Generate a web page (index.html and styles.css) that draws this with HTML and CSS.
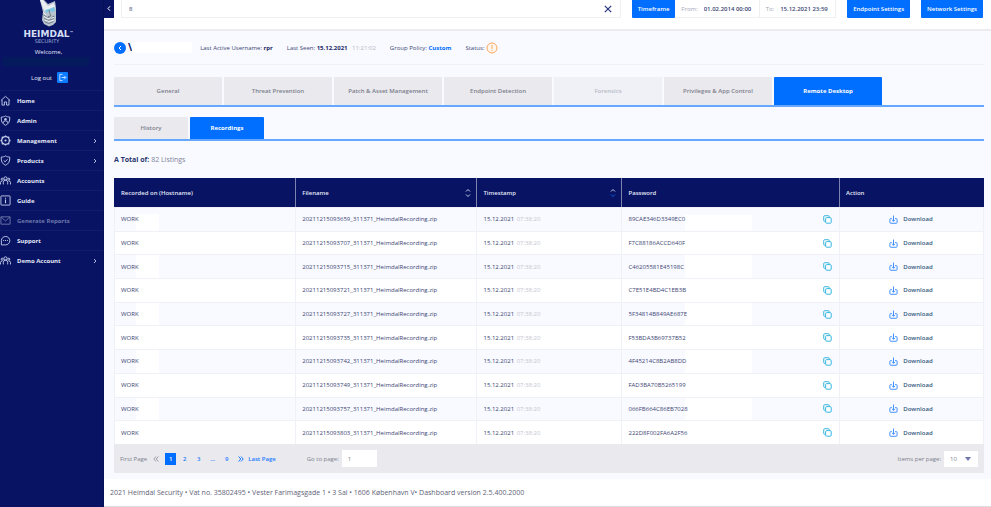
FILE: index.html
```html
<!DOCTYPE html>
<html lang="en">
<head>
<meta charset="utf-8">
<title>Heimdal Security Dashboard</title>
<link rel="stylesheet" href="styles.css">
</head>
<body>
<svg class="defs" aria-hidden="true">
  <symbol id="i-copy" viewBox="0 0 10 10"><path d="M7 2.6V1.8A1 1 0 0 0 6 .8H1.8a1 1 0 0 0-1 1V6a1 1 0 0 0 1 1h.8" fill="none" stroke="currentColor" stroke-width="1.1"/><rect x="2.9" y="2.9" width="6.2" height="6.2" rx="1.2" fill="#fff" stroke="currentColor" stroke-width="1.1"/></symbol>
  <symbol id="i-down" viewBox="0 0 10 10"><path d="M3.200 4H2a1 1 0 0 0-1 1v3.200a1 1 0 0 0 1 1h6a1 1 0 0 0 1-1V5a1 1 0 0 0-1-1H6.800M5 .6v6.200M3.400 5.400 5 7l1.600-1.600" fill="none" stroke="currentColor" stroke-width="1"/></symbol>
  <symbol id="i-right" viewBox="0 0 6 6"><path d="M2 1l2 2-2 2" fill="none" stroke="currentColor" stroke-width=".9"/></symbol>
  <symbol id="i-people" viewBox="0 0 14 12"><g fill="none" stroke="currentColor" stroke-width="1.200"><circle cx="7" cy="3.300" r="2"/><path d="M4.200 11V8.400a2.800 2.800 0 0 1 5.600 0V11"/><circle cx="2.800" cy="4.300" r="1.300"/><circle cx="11.200" cy="4.300" r="1.300"/><path d="M.6 11V8.600a2.200 2.200 0 0 1 2.400-2M13.400 11V8.600a2.200 2.200 0 0 0-2.400-2"/></g></symbol>
</svg>
<div class="app">
  <aside class="sidebar">
    <div class="brand">
      <svg class="brand-mark" viewBox="0 0 18 27" aria-hidden="true"><path d="M0 0h4l4 4 7-3 1 7v14l-3 3-4 1.500L4 24 2 20l1-8z" fill="#b9c3cd"/><path d="M0 0h3l5 6 6-3 1 4-5 2-5 3-2-4z" fill="#e9eef2"/><path d="M5 10l4-1 5-2 1 4-3 1-2-1-4 2z" fill="#7cc6e4"/><path d="M9 10l1 4 1 2-3 .5M3.500 15l3 2 4 1 4-2M4 18l4 2.500 6-2M4.500 21.500l4 2 5-2" fill="none" stroke="#66747f" stroke-width=".9"/><path d="M4 16.500l4 2 6-1M5 20l4 1.500 5-1.500M3 12l3 3" fill="none" stroke="#f5f8fa" stroke-width=".8"/></svg>
      <span class="brand-name">HEIMDAL<sup>™</sup></span>
      <span class="brand-sub">SECURITY</span>
    </div>
    <p class="welcome">Welcome,</p>
    <div class="user-name"></div>
    <a class="logout" href="#">Log out <span class="logout-icon"><svg viewBox="0 0 10 10"><path d="M5 1.500H2v7h3M4 5h4.500M6.800 3l2 2-2 2" fill="none" stroke="#cfe3ff"/></svg></span></a>
    <nav class="nav">
      <a href="#"><svg viewBox="0 0 12 12"><path d="M1 6l5-4.500L11 6M2.200 5.200V11h2.600V7.600h2.400V11h2.600V5.200" fill="none" stroke="currentColor"/></svg><span>Home</span></a>
      <a href="#"><svg viewBox="0 0 12 12"><path d="M6 1c1.500 1 3 1.200 4.600 1.200C11 7 9.500 9.600 6 11.200 2.500 9.600 1 7 1.400 2.200 3 2.200 4.500 2 6 1z" fill="none" stroke="currentColor"/><circle cx="6" cy="4.700" r="1.300" fill="currentColor"/><path d="M3.500 8.600a2.500 2.300 0 0 1 5 0" fill="none" stroke="currentColor"/></svg><span>Admin</span></a>
      <a href="#"><svg viewBox="0 0 12 12"><circle cx="6" cy="6" r="4.200" fill="none" stroke="currentColor" stroke-width="1.400"/><circle cx="6" cy="6" r="1.200" fill="currentColor"/><path d="M6 .5v1.500M6 10v1.500M.5 6H2M10 6h1.500M2 2l1 1M9 9l1 1M10 2L9 3M3 9l-1 1" stroke="currentColor" stroke-width="1.500"/></svg><span>Management</span><svg class="chev"><use href="#i-right"/></svg></a>
      <a href="#"><svg viewBox="0 0 12 12"><path d="M6 1c1.500 1 3 1.200 4.600 1.200C11 7 9.500 9.600 6 11.200 2.500 9.600 1 7 1.400 2.200 3 2.200 4.500 2 6 1zM4 6l1.600 1.500L8.200 4.600" fill="none" stroke="currentColor"/></svg><span>Products</span><svg class="chev"><use href="#i-right"/></svg></a>
      <a href="#"><svg><use href="#i-people"/></svg><span>Accounts</span></a>
      <a href="#"><svg viewBox="0 0 12 12"><rect x="1" y="1" width="10" height="10" rx=".5" fill="none" stroke="currentColor"/><path d="M6 3v1.200M6 5v4" stroke="currentColor" stroke-width="1.200"/></svg><span>Guide</span></a>
      <a href="#" class="muted"><svg viewBox="0 0 12 12"><path d="M1 2h10v8H1zM1 2l5 4.500L11 2" fill="none" stroke="currentColor"/></svg><span>Generate Reports</span></a>
      <a href="#"><svg viewBox="0 0 12 12"><path d="M1.500 10.800V6A4.600 4.600 0 1 1 6 10.800z" fill="none" stroke="currentColor"/><path d="M3.500 6h1M5.500 6h1M7.500 6h1" stroke="currentColor" stroke-width="1.200"/></svg><span>Support</span></a>
      <a href="#"><svg><use href="#i-people"/></svg><span>Demo Account</span><svg class="chev"><use href="#i-right"/></svg></a>
    </nav>
  </aside>

  <div class="page">
    <header class="topbar">
      <button class="collapse" aria-label="Collapse menu"><svg viewBox="0 0 6 6"><path d="M4 .8L2 3l2 2.200" fill="none" stroke="currentColor"/></svg></button>
      <div class="search">
        <input type="text" value="8" aria-label="Search">
        <button aria-label="Clear search"><svg viewBox="0 0 8 8"><path d="M.8.8l6.400 6.400M7.200.8L.8 7.200" stroke="#25327e" stroke-width="1.200"/></svg></button>
      </div>
      <div class="timeframe">
        <button class="primary">Timeframe</button>
        <label class="date from">From: <input type="text" value="01.02.2014 00:00"></label>
        <label class="date to">To: <input type="text" value="15.12.2021 23:59"></label>
      </div>
      <button class="primary">Endpoint Settings</button>
      <button class="primary">Network Settings</button>
    </header>

    <main class="content">
      <div class="host">
        <div class="host-title">
          <button class="back" aria-label="Back"><svg viewBox="0 0 6 6"><path d="M4 1L2 3l2 2" fill="none" stroke="currentColor"/></svg></button>
          <h1>\</h1><span class="host-mask"></span>
        </div>
        <span>Last Active Username: <b>rpr</b></span>
        <span>Last Seen: <b>15.12.2021</b> <time>11:21:02</time></span>
        <span>Group Policy: <a href="#">Custom</a></span>
        <span class="status">Status: <svg viewBox="0 0 12 12"><circle cx="6" cy="6" r="5" fill="#fff6ee" stroke="#f9a75f"/><path d="M6 3v3.800M6 7.800v1.200" stroke="#f9a75f"/></svg></span>
      </div>

      <nav class="tabs">
        <a href="#">General</a><a href="#">Threat Prevention</a><a href="#">Patch &amp; Asset Management</a><a href="#">Endpoint Detection</a><a href="#" class="off">Forensics</a><a href="#">Privileges &amp; App Control</a><a href="#" class="on">Remote Desktop</a>
      </nav>
      <nav class="tabs sub">
        <a href="#">History</a><a href="#" class="on">Recordings</a>
      </nav>

      <p class="total"><b>A Total of:</b> 82 Listings</p>

      <table class="grid">
        <colgroup><col class="c5"><col class="c5"><col class="c4"><col class="c6"><col class="c4"></colgroup>
        <thead><tr>
          <th>Recorded on (Hostname)</th>
          <th><div>Filename <svg viewBox="0 0 6 10"><path d="M1 3.500l2-2 2 2M1 6.500l2 2 2-2" fill="none" stroke="#c5cbe6"/></svg></div></th>
          <th><div>Timestamp <svg viewBox="0 0 6 10"><path d="M1 3.500l2-2 2 2" fill="none" stroke="#c5cbe6"/><path d="M1 6.500l2 2 2-2" fill="none" stroke="#0f5fe0"/></svg></div></th>
          <th>Password</th>
          <th>Action</th>
        </tr></thead>
        <tbody>
          <tr><td class="name">WORK</td><td>20211215093659_311371_HeimdalRecording.zip</td><td>15.12.2021 <time>07:38:20</time></td><td class="pass"><div><span>89CAE346D3349EC0</span><button aria-label="Copy"><svg><use href="#i-copy"/></svg></button></div></td><td class="act"><a href="#"><svg><use href="#i-down"/></svg>Download</a></td></tr>
          <tr><td class="name">WORK</td><td>20211215093707_311371_HeimdalRecording.zip</td><td>15.12.2021 <time>07:38:20</time></td><td class="pass"><div><span>F7C88186ACCD640F</span><button aria-label="Copy"><svg><use href="#i-copy"/></svg></button></div></td><td class="act"><a href="#"><svg><use href="#i-down"/></svg>Download</a></td></tr>
          <tr><td class="name">WORK</td><td>20211215093715_311371_HeimdalRecording.zip</td><td>15.12.2021 <time>07:38:20</time></td><td class="pass"><div><span>C46205581E45198C</span><button aria-label="Copy"><svg><use href="#i-copy"/></svg></button></div></td><td class="act"><a href="#"><svg><use href="#i-down"/></svg>Download</a></td></tr>
          <tr><td class="name">WORK</td><td>20211215093721_311371_HeimdalRecording.zip</td><td>15.12.2021 <time>07:38:20</time></td><td class="pass"><div><span>C7E51E4BD4C1EB3B</span><button aria-label="Copy"><svg><use href="#i-copy"/></svg></button></div></td><td class="act"><a href="#"><svg><use href="#i-down"/></svg>Download</a></td></tr>
          <tr><td class="name">WORK</td><td>20211215093727_311371_HeimdalRecording.zip</td><td>15.12.2021 <time>07:38:20</time></td><td class="pass"><div><span>5F34814B849AE687E</span><button aria-label="Copy"><svg><use href="#i-copy"/></svg></button></div></td><td class="act"><a href="#"><svg><use href="#i-down"/></svg>Download</a></td></tr>
          <tr><td class="name">WORK</td><td>20211215093735_311371_HeimdalRecording.zip</td><td>15.12.2021 <time>07:38:20</time></td><td class="pass"><div><span>F53BDA3B69737B52</span><button aria-label="Copy"><svg><use href="#i-copy"/></svg></button></div></td><td class="act"><a href="#"><svg><use href="#i-down"/></svg>Download</a></td></tr>
          <tr><td class="name">WORK</td><td>20211215093742_311371_HeimdalRecording.zip</td><td>15.12.2021 <time>07:38:20</time></td><td class="pass"><div><span>4F45214C8B2AB8DD</span><button aria-label="Copy"><svg><use href="#i-copy"/></svg></button></div></td><td class="act"><a href="#"><svg><use href="#i-down"/></svg>Download</a></td></tr>
          <tr><td class="name">WORK</td><td>20211215093749_311371_HeimdalRecording.zip</td><td>15.12.2021 <time>07:38:20</time></td><td class="pass"><div><span>FAD3BA70B5265199</span><button aria-label="Copy"><svg><use href="#i-copy"/></svg></button></div></td><td class="act"><a href="#"><svg><use href="#i-down"/></svg>Download</a></td></tr>
          <tr><td class="name">WORK</td><td>20211215093757_311371_HeimdalRecording.zip</td><td>15.12.2021 <time>07:38:20</time></td><td class="pass"><div><span>066FB664C86EB7028</span><button aria-label="Copy"><svg><use href="#i-copy"/></svg></button></div></td><td class="act"><a href="#"><svg><use href="#i-down"/></svg>Download</a></td></tr>
          <tr><td class="name">WORK</td><td>20211215093803_311371_HeimdalRecording.zip</td><td>15.12.2021 <time>07:38:20</time></td><td class="pass"><div><span>222D8F002FA6A2F56</span><button aria-label="Copy"><svg><use href="#i-copy"/></svg></button></div></td><td class="act"><a href="#"><svg><use href="#i-down"/></svg>Download</a></td></tr>
        </tbody>
      </table>

      <div class="pager">
        <span class="first">First Page</span>
        <svg class="first" viewBox="0 0 6 8"><path d="M3 1.500L.8 4 3 6.500M5.400 1.500L3.200 4l2.200 2.500" fill="none" stroke="currentColor" stroke-width=".7"/></svg>
        <div class="pages"><a class="on" href="#">1</a><a href="#">2</a><a href="#">3</a><a href="#">...</a><a href="#">9</a></div>
        <a class="last" href="#"><svg viewBox="0 0 6 8"><path d="M.6 1.500L2.800 4 .6 6.500M3 1.500L5.200 4 3 6.500" fill="none" stroke="currentColor"/></svg>Last Page</a>
        <label class="goto">Go to page: <input type="text" value="1"></label>
        <label class="per">Items per page: <select><option>10</option></select></label>
      </div>
    </main>

    <footer class="footer">2021 Heimdal Security • Vat no. 35802495 • Vester Farimagsgade 1 • 3 Sal • 1606 København V• Dashboard version 2.5.400.2000</footer>
  </div>
</div>
</body>
</html>
```
FILE: styles.css
```css
* { box-sizing: border-box; }

body {
  margin: 0;
  font: 6px/8px "Open Sans", sans-serif;
  color: #3b4573;
  background: #fff;
}

a { color: inherit; text-decoration: none; }

button, input, select {
  font: inherit;
  color: inherit;
  border: 0;
  padding: 0;
  margin: 0;
  background: none;
}

p, h1 { margin: 0; }

.defs { display: none; }

.app { display: flex; min-height: 100vh; }

/* Sidebar */
.sidebar {
  flex: none;
  width: 104px;
  background: #081463;
  border-right: 1px solid #051055;
  color: #e4e8f8;
}

.brand { display: flex; flex-direction: column; align-items: center; padding-right: 6px; }
.brand-mark { width: 18px; height: 27px; }
.brand-name {
  margin-top: 2px;
  font: bold 9px/10px "DejaVu Sans", sans-serif;
  color: #d5def5;
}
.brand-name sup { font-size: 4px; line-height: 4px; vertical-align: 3px; }
.brand-sub { margin-right: 3px; font: 5px/4px "DejaVu Sans", sans-serif; color: #9fabd8; }

.welcome { margin-top: 4px; padding-right: 6px; line-height: 10px; text-align: center; }
.user-name { height: 9px; margin: 0 14px 0 3px; background: #051a5c; }

.logout {
  display: flex;
  align-items: center;
  gap: 5px;
  margin: 6px 0 7px 31px;
}
.logout-icon { display: flex; width: 11px; height: 11px; padding: 1px; border-radius: 1px; background: #0b7bff; }

.nav a {
  display: flex;
  align-items: center;
  gap: 6px;
  height: 20px;
  padding-right: 5px;
  border-top: 1px solid #101d6d;
  font-weight: 700;
}
.nav svg { width: 11px; height: 11px; color: #c3cbea; }
.nav span { flex: 1; }
.nav .chev { width: 6px; height: 6px; }
.nav .muted, .nav .muted svg { color: #6d77ab; }

/* Top bar */
.page { flex: 1; min-width: 0; display: flex; flex-direction: column; }

.topbar {
  display: flex;
  align-items: flex-start;
  gap: 11px;
  height: 31px;
  padding-right: 8px;
  border-bottom: 2px solid #ebebf0;
}

.collapse { width: 10px; height: 18px; margin-right: -4px; background: #081463; color: #fff; }
.collapse svg { width: 6px; height: 7px; }

.search {
  flex: 1;
  display: flex;
  align-items: center;
  height: 18px;
  padding: 0 8px 0 7px;
  border: 1px solid #f0f0f4;
  border-top: 0;
}
.search input { flex: 1; min-width: 0; }
.search svg { display: block; width: 8px; height: 8px; }

.timeframe { display: flex; }
.primary {
  height: 18px;
  padding: 0 6px;
  border-radius: 0 0 1px 1px;
  background: #006eff;
  color: #fff;
  font-weight: 600;
}
.date {
  display: flex;
  align-items: center;
  gap: 6px;
  height: 18px;
  padding: 0 6px;
  border: solid #f0f0f4;
  border-width: 0 1px 1px 0;
  color: #a3a6b8;
}
.date input { width: 49px; font-weight: 600; color: #3b4573; }

/* Host summary */
.content { padding: 0 7px 6px 10px; background: #f9faff; }

.host {
  display: flex;
  align-items: center;
  gap: 14px;
  height: 34px;
  border-bottom: 1px solid #f0f1f5;
}
.host time { margin-left: 3px; color: #b3b6c4; }
.host a { color: #006eff; font-weight: 700; }
.host b { color: #1c2865; }
.host-title { display: flex; align-items: center; margin-right: -6px; }
.host-title h1 { margin-left: 2px; font-size: 10px; line-height: 11px; color: #081463; }
.host-mask { flex: 0 0 60px; height: 11px; background: #fff; }
.back { display: flex; align-items: center; justify-content: center; width: 12px; height: 12px; border-radius: 50%; background: #006eff; color: #fff; }
.back svg { width: 6px; height: 6px; }
.status { display: flex; align-items: center; gap: 2px; }
.status svg { width: 12px; height: 12px; }

/* Tabs */
.tabs {
  display: flex;
  gap: 2px;
  margin-top: 12px;
  border-bottom: 2px solid #66a8ff;
}
.tabs a {
  flex: 0 0 108px;
  height: 28px;
  line-height: 28px;
  text-align: center;
  font-weight: 600;
  color: #7d7f8c;
  background: #e9e9ee;
}
.tabs .off { background: #eff1f6; color: #b8bac6; }
.tabs .on { background: #006eff; color: #fff; font-weight: 700; border-radius: 1px 1px 0 0; }
.sub { margin-top: 10px; }
.sub a { flex-basis: 74px; height: 22px; line-height: 22px; }

.total { font-size: 7px; line-height: 37px; color: #81849a; }
.total b { color: #28336c; }

/* Recordings table */
.grid {
  width: 100%;
  height: 266px;
  table-layout: fixed;
  border-collapse: separate;
  border-spacing: 0;
}
.c4 { width: 16.6667%; }
.c5 { width: 20.8333%; }
.c6 { width: 25%; }

.grid th {
  height: 29px;
  padding: 0 5px 0 6px;
  background: #081463;
  border-left: 1px solid #7b83ae;
  text-align: left;
  font-weight: 600;
  color: #e4e8f8;
}
.grid th:first-child { border-left-color: #081463; }
.grid th div { display: flex; align-items: center; justify-content: space-between; }
.grid th svg { width: 6px; height: 10px; }

.grid td {
  padding: 0 7px 0 6px;
  border-left: 1px solid #f0f1f6;
  border-top: 1px solid #f0f1f6;
  white-space: nowrap;
}
.grid td:last-child { border-right: 1px solid #f0f1f6; }
.grid tbody tr:nth-child(even) { background: #fff; }
.grid time { margin-left: 1px; color: #c3c5cf; }

.grid .name { background: linear-gradient(#fff, #fff) 22px 0 / 23px 100% no-repeat border-box; }
.grid .pass { background: linear-gradient(#fff, #fff) 64px 0 / 67px 100% no-repeat border-box; }
.grid tr:first-child .name { background-position-y: 7px; }
.grid tr:first-child .pass { background-position-y: 8px; }
.pass div { display: flex; align-items: center; justify-content: space-between; }
.pass svg { display: block; width: 9px; height: 9px; color: #35b5e0; }

.act a { display: flex; align-items: center; justify-content: center; gap: 5px; font-weight: 600; color: #34597c; }
.act svg { width: 9px; height: 9px; color: #2f86ff; }

/* Pager */
.pager {
  display: flex;
  align-items: center;
  gap: 6px;
  height: 29px;
  padding: 0 6px;
  background: #e9e9ee;
  color: #7d7f8c;
}
.pager svg { width: 6px; height: 8px; }
.pages { display: flex; gap: 3px; }
.pages a { width: 11px; line-height: 12px; text-align: center; font-weight: 600; color: #1a7bff; }
.pages .on { background: #006eff; color: #fff; }
.last { display: flex; align-items: center; gap: 4px; font-weight: 600; color: #1a7bff; }
.goto, .per { display: flex; align-items: center; gap: 3px; }
.goto { margin-left: 25px; }
.goto input { width: 35px; height: 17px; padding: 0 6px; background: #fff; }
.per { margin-left: auto; }
.per select {
  appearance: none;
  width: 34px;
  height: 16px;
  padding: 0 6px;
  background: url("data:image/svg+xml,%3Csvg xmlns='http://www.w3.org/2000/svg' viewBox='0 0 6 4'%3E%3Cpath d='M0 0h6L3 4z' fill='%236f79ad'/%3E%3C/svg%3E") 21px 50% / 6px 4px no-repeat #fff;
}

.footer {
  flex: 1;
  padding-left: 6px;
  border-bottom: 1px solid #dcdce2;
  font-size: 7px;
  line-height: 27px;
  color: #5f6278;
}
```
